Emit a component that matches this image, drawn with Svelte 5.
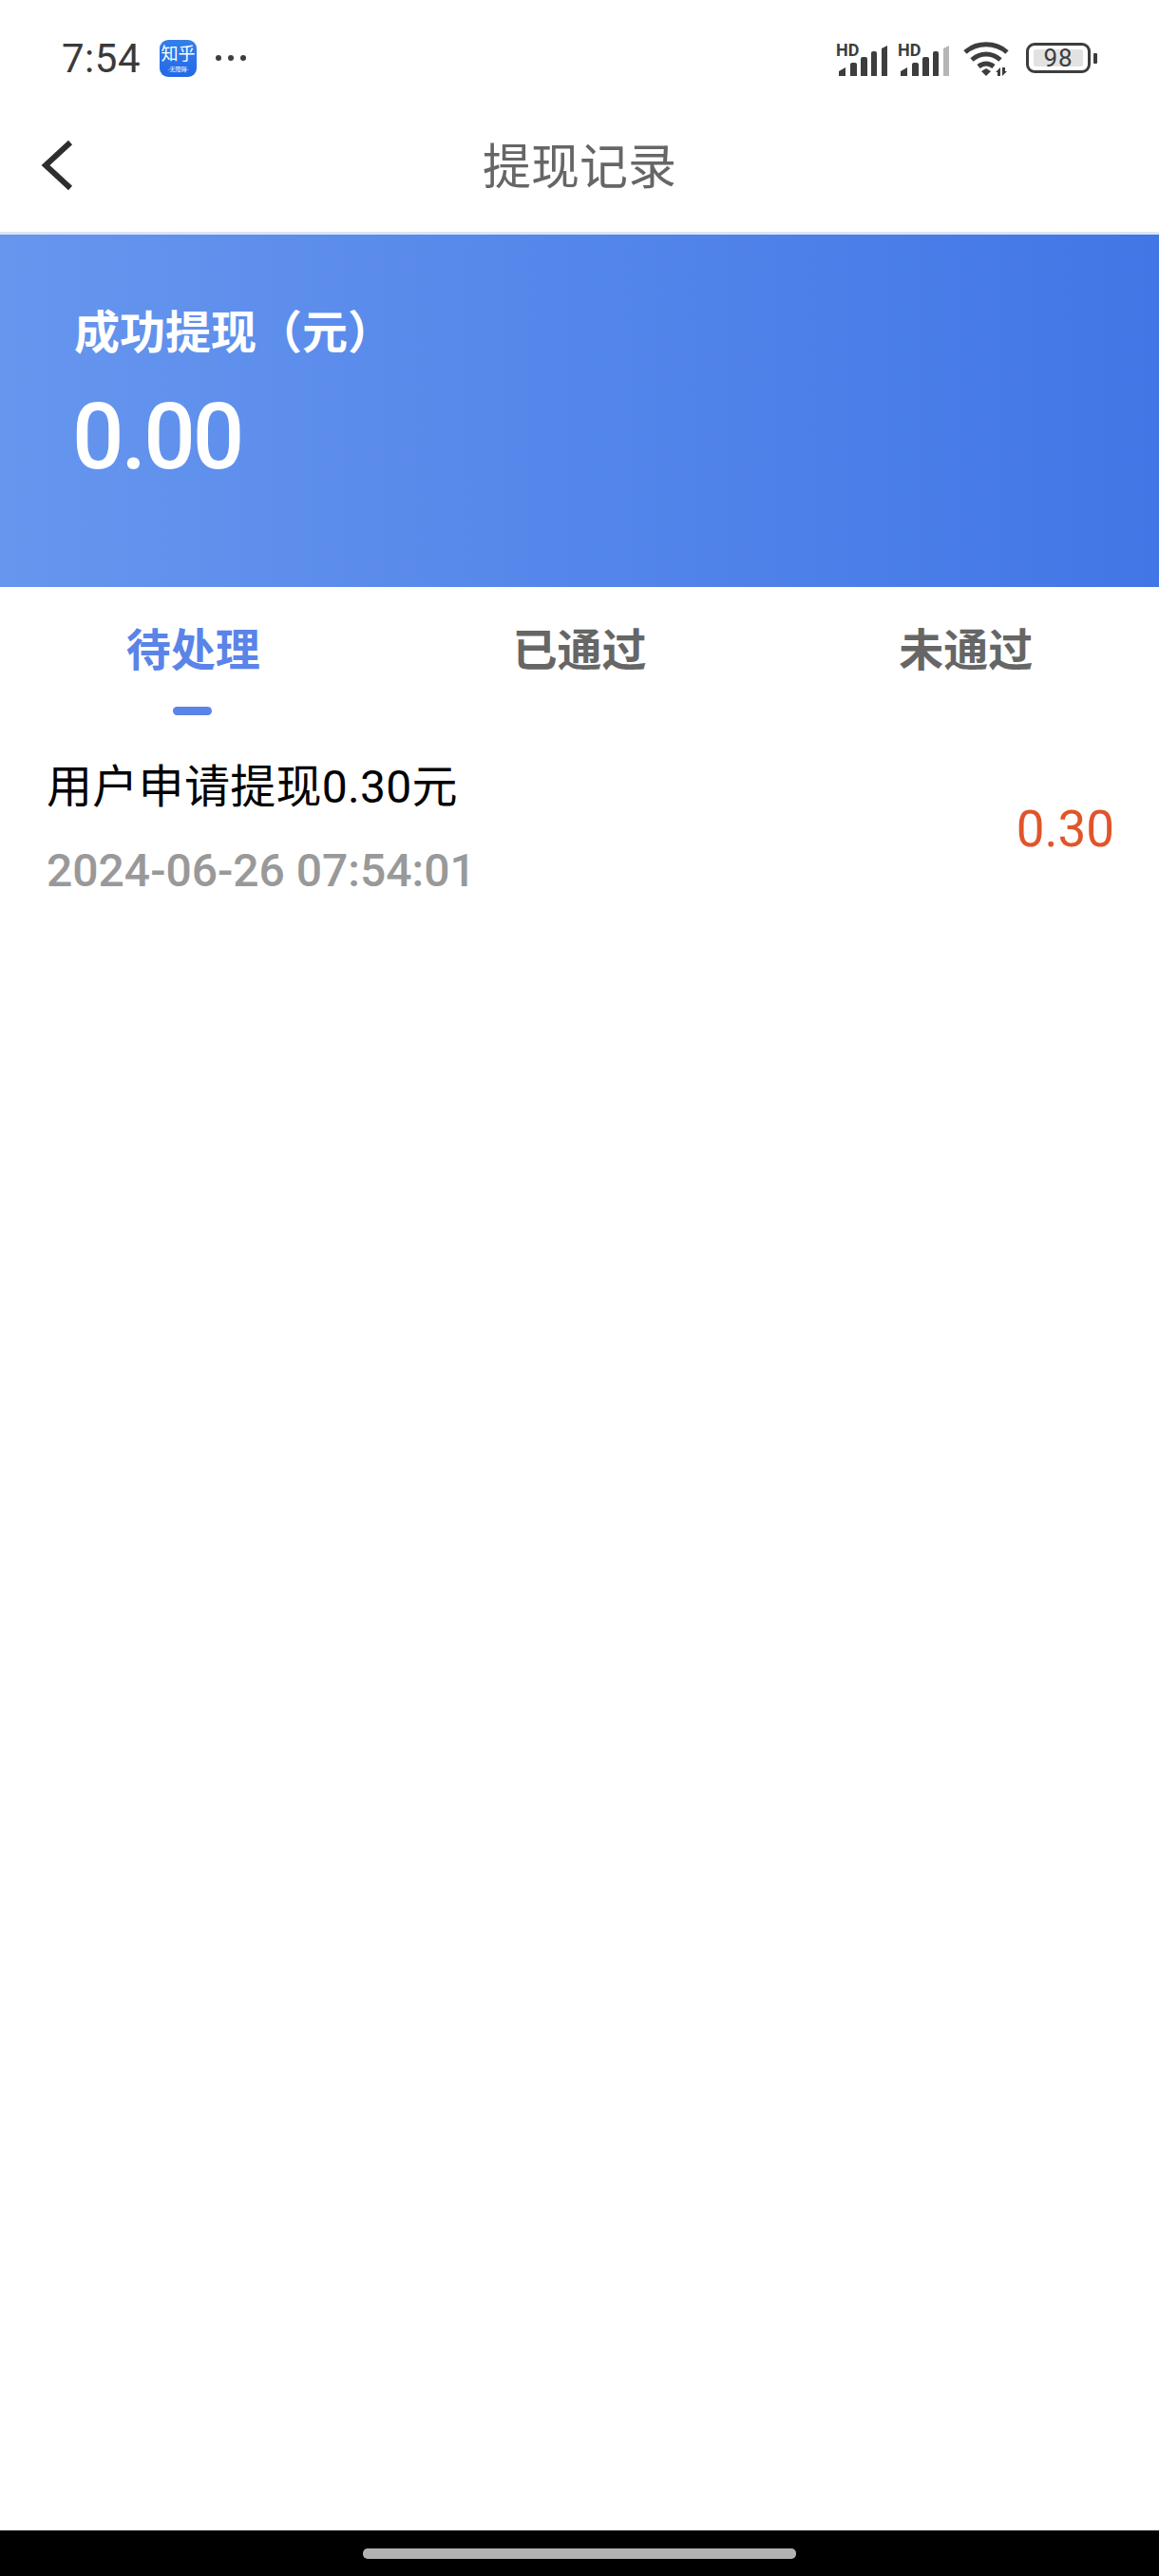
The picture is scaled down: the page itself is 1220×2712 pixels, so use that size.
<script>
  let tabs = ["待处理", "已通过", "未通过"];
  let active = $state(0);
  let records = [{ title: "用户申请提现0.30元", time: "2024-06-26 07:54:01", amount: "0.30" }];
</script>

<div class="page">
  <div class="status">
    <span class="time">7:54</span>
    <div class="app-icon">
      <span class="app-name">知乎</span>
      <span class="app-sub">-无障碍-</span>
    </div>
    <div class="dots"><i></i><i></i><i></i></div>

    <div class="status-right">
      <svg class="signal" width="54" height="42" viewBox="0 -4 54 42">
        <text x="0" y="15" class="hd">HD</text>
        <path d="M3 36v-5l7-4v9zM15 36V24q0-2 2-2h3q2 0 2 2v12zM26 36V18q0-2 2-2h3q2 0 2 2v18zM37 36V12q0-2 2-2h2q2 0 2 2v24zM48 36V7l6-3v32z" fill="#3d3d3d" />
      </svg>
      <svg class="signal" width="54" height="42" viewBox="0 -4 54 42">
        <text x="0" y="15" class="hd">HD</text>
        <path d="M3 36v-5l7-4v9zM15 36V24q0-2 2-2h3q2 0 2 2v12zM26 36V18q0-2 2-2h3q2 0 2 2v18zM37 36V12q0-2 2-2h2q2 0 2 2v24z" fill="#3d3d3d" />
        <path d="M48 36V7l6-3v32z" fill="#b5b5b5" />
      </svg>
      <svg class="wifi-icon" width="50" height="37" viewBox="0 0 50 37">
        <path d="M3 12C15 1 35 1 47 12" class="wifi" />
        <path d="M10 20C19 12 31 12 40 20" class="wifi" />
        <path d="M17 27C22 23 28 23 33 27" class="wifi" />
        <path d="M20 32l5-3 5 3-5 5z" fill="#3d3d3d" />
        <path d="M40 37v-9l-5 5h2v4zM42 28v9l5-5h-2v-4z" fill="#3d3d3d" />
      </svg>
      <div class="battery">
        <div class="battery-body"><span>98</span></div>
        <div class="battery-nub"></div>
      </div>
    </div>
  </div>

  <div class="nav">
    <svg class="back" width="34" height="54" viewBox="0 0 34 54">
      <path d="M31 3L5 27l26 24" fill="none" stroke="#2e2e2e" stroke-width="6" />
    </svg>
    <span class="nav-title">提现记录</span>
  </div>

  <div class="banner">
    <div class="banner-label">成功提现（元）</div>
    <div class="banner-value">0.00</div>
  </div>

  <div class="tabs">
    {#each tabs as tab, i}
      <button class="tab" class:active={active === i} onclick={() => (active = i)}>
        {tab}
        {#if active === i}<span class="tab-line"></span>{/if}
      </button>
    {/each}
  </div>

  <div class="list">
    {#each records as rec}
      <div class="row">
        <div class="row-left">
          <div class="row-title">{rec.title}</div>
          <div class="row-time">{rec.time}</div>
        </div>
        <div class="row-amount">{rec.amount}</div>
      </div>
    {/each}
  </div>

  <div class="navbar"><div class="pill"></div></div>
</div>

<style>
  :global(body) {
    margin: 0;
    background: #fff;
  }
  .page {
    width: 1220px;
    height: 2712px;
    display: flex;
    flex-direction: column;
    font-family: Roboto, "Noto Sans CJK SC", sans-serif;
    background: #fff;
    overflow: hidden;
  }
  .status {
    height: 100px;
    box-sizing: border-box;
    padding: 42px 65px 0 65px;
    display: flex;
    align-items: flex-start;
  }
  .time {
    font-size: 42px;
    line-height: 39px;
    letter-spacing: 0.5px;
    color: #3a3a3a;
    width: 103px;
  }
  .app-icon {
    width: 39px;
    height: 39px;
    border-radius: 9px;
    background: linear-gradient(180deg, #3480ea, #2468e6);
    color: #fff;
    display: flex;
    flex-direction: column;
    align-items: center;
    overflow: hidden;
  }
  .app-name {
    font-size: 18px;
    line-height: 24px;
    margin-top: 3px;
    white-space: nowrap;
  }
  .app-sub {
    font-size: 6px;
    line-height: 8px;
    white-space: nowrap;
  }
  .dots {
    display: flex;
    gap: 7px;
    margin: 16px 0 0 20px;
  }
  .dots i {
    width: 6px;
    height: 6px;
    border-radius: 50%;
    background: #3d3d3d;
  }
  .status-right {
    margin-left: auto;
    display: flex;
    align-items: flex-start;
    gap: 11px;
  }
  .wifi-icon {
    margin: 1px 0 0 3px;
  }
  .signal {
    margin-top: -2px;
  }
  .hd {
    font: 700 18px Roboto, sans-serif;
    fill: #3d3d3d;
  }
  .wifi {
    fill: none;
    stroke: #3d3d3d;
    stroke-width: 5;
  }
  .battery {
    display: flex;
    align-items: center;
    margin: 3px 0 0 6px;
    gap: 3px;
  }
  .battery-body {
    width: 68px;
    height: 32px;
    box-sizing: border-box;
    border: 3px solid #3d3d3d;
    border-radius: 9px;
    padding: 4px 5px;
    display: flex;
  }
  .battery-body span {
    flex: 1;
    background: #e2e2e2;
    border-radius: 2px;
    color: #3c3c3c;
    font-size: 26px;
    line-height: 18px;
    letter-spacing: 1px;
    text-align: center;
  }
  .battery-nub {
    width: 4px;
    height: 11px;
    background: #3d3d3d;
    border-radius: 1px;
  }
  .nav {
    height: 144px;
    box-sizing: border-box;
    display: flex;
    align-items: center;
    justify-content: center;
    position: relative;
  }
  .back {
    position: absolute;
    left: 43px;
    top: 47px;
  }
  .nav-title {
    font-size: 51px;
    color: #666;
  }
  .banner {
    height: 374px;
    box-sizing: border-box;
    border-top: 3px solid #dbe5f3;
    background: linear-gradient(90deg, #6696ee, #4276e6);
    padding: 76px 0 0 78px;
    color: #fff;
  }
  .banner-label {
    font-size: 48px;
    font-weight: 700;
    line-height: 56px;
  }
  .banner-value {
    font-size: 96px;
    font-weight: 500;
    line-height: 112px;
    margin: 25px 0 0 -2px;
    letter-spacing: -3px;
  }
  .tabs {
    display: grid;
    grid-template-columns: repeat(3, 1fr);
    height: 136px;
    width: 1220px;
  }
  .tab {
    position: relative;
    background: none;
    border: none;
    padding: 0 0 12px;
    height: 136px;
    font: 700 47px Roboto, "Noto Sans CJK SC", sans-serif;
    color: #666;
    cursor: pointer;
  }
  .tab.active {
    color: #5a84e8;
  }
  .tab-line {
    position: absolute;
    left: 50%;
    bottom: 1px;
    width: 41px;
    height: 9px;
    margin-left: -21px;
    border-radius: 5px;
    background: #5a84e8;
  }
  .list {
    flex: 1;
    padding: 0 47px 0 49px;
  }
  .row {
    display: flex;
    align-items: center;
    justify-content: space-between;
    padding-top: 47px;
  }
  .row-title {
    font-size: 48px;
    line-height: 56px;
    letter-spacing: 0.3px;
    color: #000;
  }
  .row-time {
    font-size: 48px;
    line-height: 56px;
    margin-top: 32px;
    color: #999;
    font-weight: 500;
  }
  .row-amount {
    font-size: 53px;
    color: #e0552b;
  }
  .navbar {
    height: 48px;
    background: #000;
    display: flex;
    justify-content: center;
    padding-top: 19px;
    box-sizing: border-box;
  }
  .pill {
    width: 456px;
    height: 11px;
    border-radius: 5px;
    background: #b2b2b2;
  }
</style>
